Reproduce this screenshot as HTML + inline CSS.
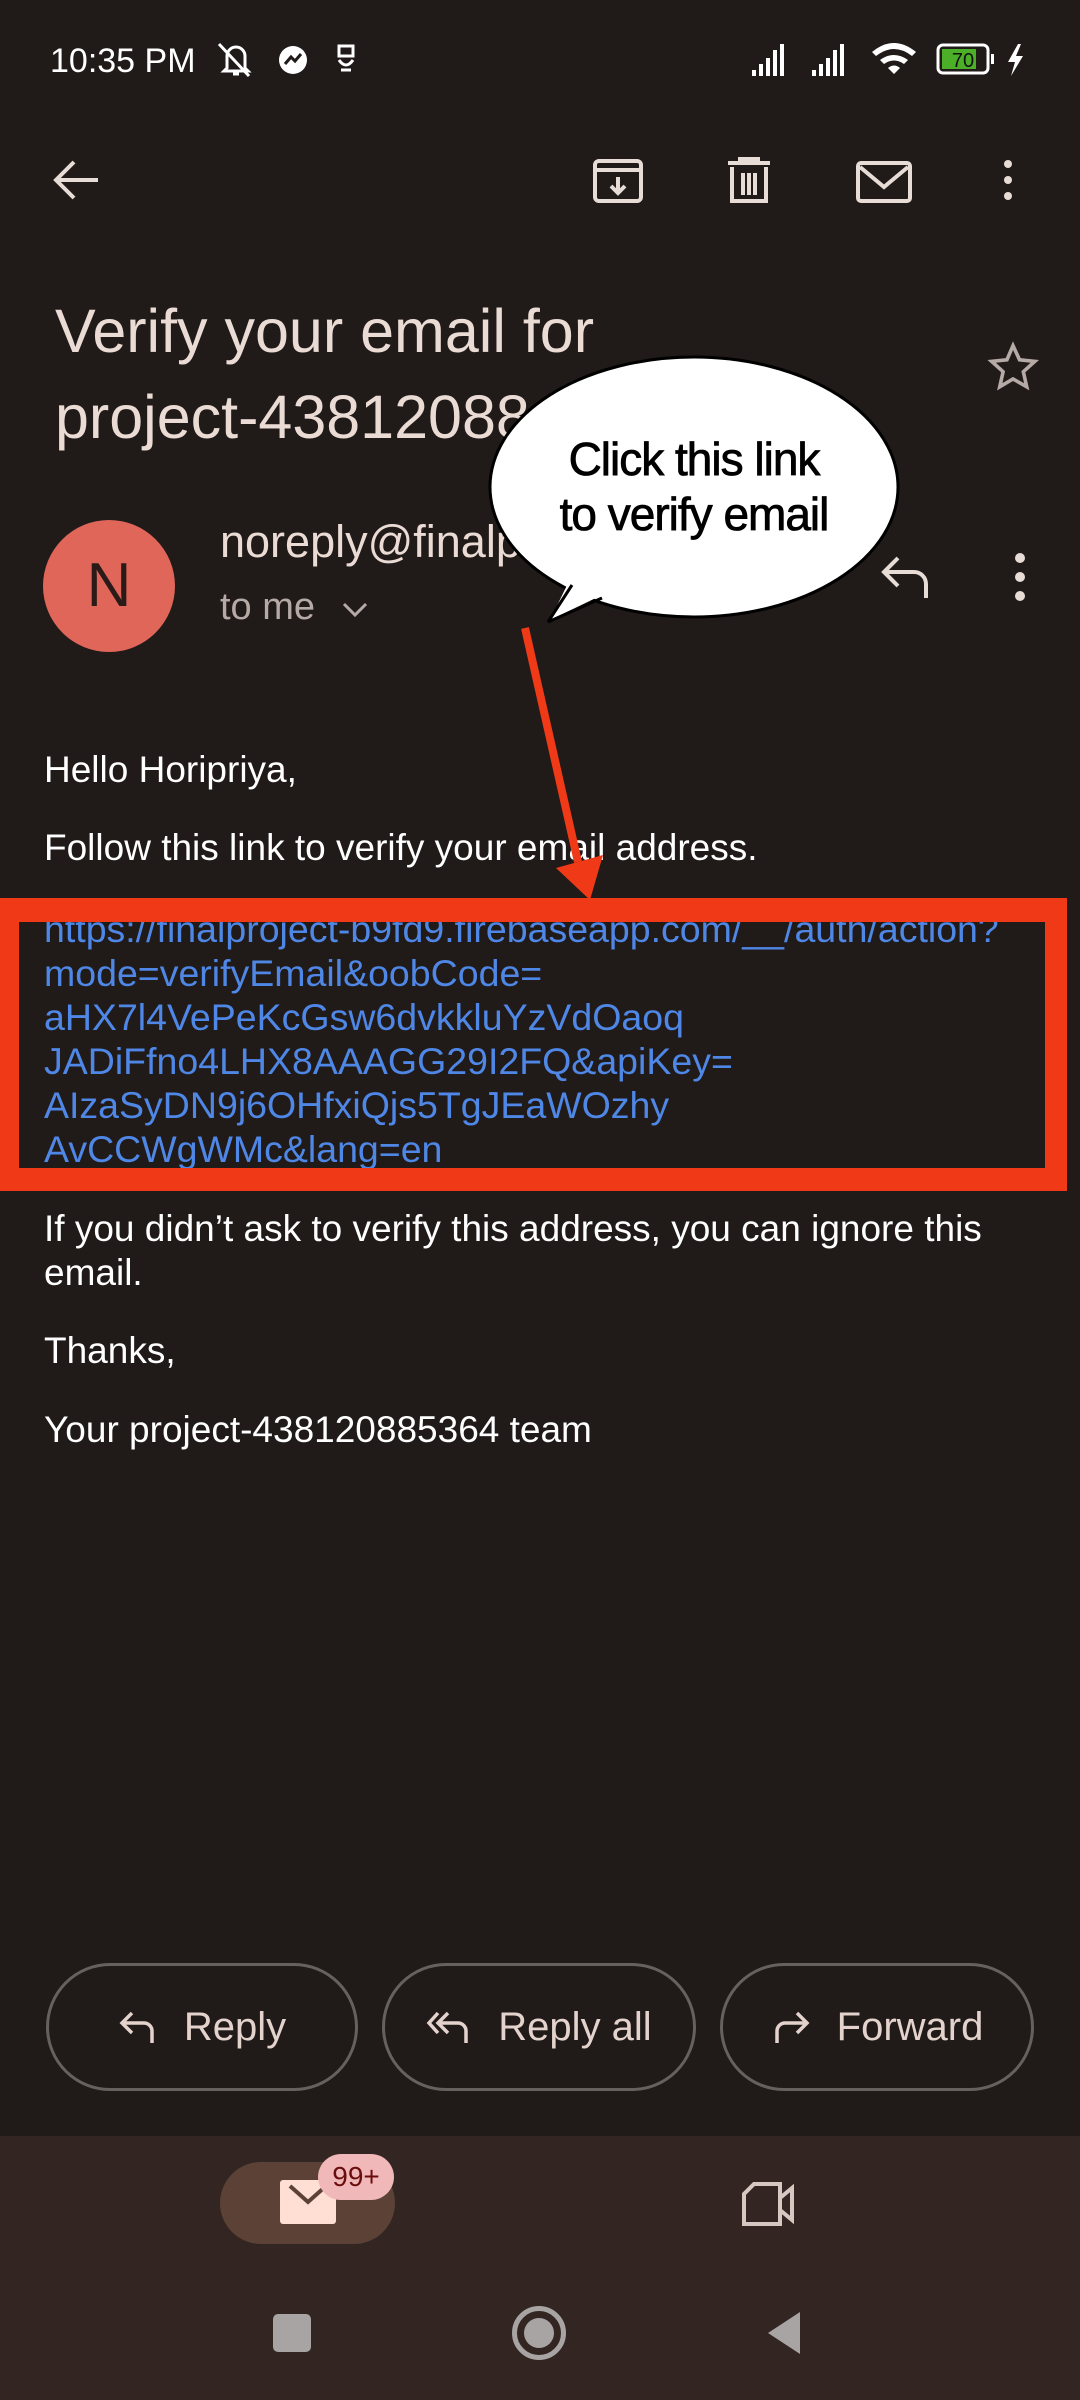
<!DOCTYPE html>
<html><head><meta charset="utf-8"><style>
*{margin:0;padding:0;box-sizing:border-box}
body{width:1080px;height:2400px;background:#201a19;position:relative;overflow:hidden;font-family:"Liberation Sans",sans-serif;color:#f2e8e4}
.a{position:absolute;white-space:nowrap}
.b{font-size:37px;color:#fff;left:44px}
.l{font-size:37.5px;color:#4f87e6;left:44px}
.btn{position:absolute;top:1963px;height:128px;border:3px solid #66615f;border-radius:64px;display:flex;align-items:center;justify-content:center;gap:26px;color:#e4d3cc;font-size:40px}
</style></head><body>
<!-- status bar -->
<div class="a" style="left:50px;top:42px;font-size:34px;color:#fff">10:35 PM</div>
<svg class="a" style="left:215px;top:38px" width="150" height="44" viewBox="0 0 150 44" fill="none" stroke="#fff" stroke-width="3">
<path d="M12 30 V18 a9 9 0 0 1 18 0 V30 l3 3 H9z M4 6 L34 38 M18 36 h6"/>
<circle cx="78" cy="22" r="14" fill="#fff" stroke="none"/><path d="M70 26 l6-7 4 4 6-7" stroke="#201a19"/>
<path d="M124 8 h14 v10 h-14z M124 22 q7 10 14 0 M126 32 h10"/></svg>
<svg class="a" style="left:750px;top:40px" width="290" height="40" viewBox="0 0 290 40" fill="#fff">
<rect x="2" y="30" width="4" height="6"/><rect x="9" y="24" width="4" height="12"/><rect x="16" y="18" width="4" height="18"/><rect x="23" y="10" width="4" height="26"/><rect x="30" y="4" width="4" height="32"/>
<rect x="62" y="30" width="4" height="6"/><rect x="69" y="24" width="4" height="12"/><rect x="76" y="18" width="4" height="18"/><rect x="83" y="10" width="4" height="26"/><rect x="90" y="4" width="4" height="32"/>
<path d="M122 12 q22-18 44 0 l-4 4 q-18-14 -36 0z M130 20 q14-10 28 0 l-4 4 q-10-7 -20 0z M138 28 q6-5 12 0 l-6 6z"/>
<rect x="188" y="5" width="50" height="28" rx="5" fill="none" stroke="#fff" stroke-width="3"/><rect x="192" y="9" width="34" height="20" fill="#4caf28"/>
<text x="213" y="27" font-size="20" fill="#111" text-anchor="middle" font-family="Liberation Sans">70</text>
<rect x="241" y="14" width="3" height="10"/><path d="M268 4 l-10 18 h7 l-4 14 l12-20 h-7 l5-12z"/></svg>
<!-- toolbar -->
<svg class="a" style="left:50px;top:155px" width="980" height="50" viewBox="0 0 980 50" fill="none" stroke="#e8dcd6" stroke-width="4">
<path d="M48 25 H6 M24 7 L6 25 L24 43"/>
<rect x="545" y="6" width="46" height="40" rx="4"/><path d="M545 15 h46 M568 22 v16 M561 31 l7 7 7-7"/>
<path d="M678 8 h42 M690 8 v-4 h18 v4 M682 12 v34 h34 v-34 M693 18 v22 M699 18 v22 M705 18 v22"/>
<rect x="808" y="8" width="52" height="38" rx="3"/><path d="M810 12 l24 20 24-20"/>
<circle cx="958" cy="9" r="4" fill="#e8dcd6" stroke="none"/><circle cx="958" cy="25" r="4" fill="#e8dcd6" stroke="none"/><circle cx="958" cy="41" r="4" fill="#e8dcd6" stroke="none"/></svg>
<!-- subject -->
<div class="a" style="left:55px;top:288px;font-size:61px;color:#eadbd4;line-height:86px">Verify your email for<br>project-43812088</div>
<svg class="a" style="left:986px;top:340px" width="54" height="54" viewBox="0 0 24 24" fill="none" stroke="#b5aaa6" stroke-width="1.6"><path d="M12 2.5l2.9 6.3 6.8.7-5.1 4.6 1.5 6.7L12 17.3l-5.9 3.5 1.5-6.7-5.1-4.6 6.8-.7z"/></svg>
<!-- sender -->
<div class="a" style="left:43px;top:520px;width:132px;height:132px;border-radius:50%;background:#e0665a;color:#2a1a18;font-size:62px;text-align:center;line-height:132px">N</div>
<div class="a" style="left:220px;top:516px;font-size:45px;color:#eadbd4">noreply@finalp</div>
<div class="a" style="left:220px;top:586px;font-size:38px;color:#b5aaa6">to me</div>
<svg class="a" style="left:340px;top:598px" width="30" height="24" viewBox="0 0 30 24" fill="none" stroke="#b5aaa6" stroke-width="3"><path d="M4 6 l11 11 11-11"/></svg>
<svg class="a" style="left:878px;top:552px" width="54" height="50" viewBox="0 0 54 50" fill="none" stroke="#e8dcd6" stroke-width="4"><path d="M20 6 L6 20 L20 34 M6 20 H36 a12 12 0 0 1 12 12 V46"/></svg>
<svg class="a" style="left:1010px;top:552px" width="20" height="50"><circle cx="10" cy="6" r="5" fill="#e8dcd6"/><circle cx="10" cy="25" r="5" fill="#e8dcd6"/><circle cx="10" cy="44" r="5" fill="#e8dcd6"/></svg>
<!-- body -->
<div class="a b" style="top:749px">Hello Horipriya,</div>
<div class="a b" style="top:827px">Follow this link to verify your email address.</div>
<!-- bubble + arrow -->
<svg class="a" style="left:0;top:340px" width="1080" height="580" viewBox="0 340 1080 580">
<ellipse cx="694" cy="487" rx="204" ry="130" fill="#fff" stroke="#000" stroke-width="3"/>
<path d="M572 575 L550 620 L600 596z" fill="#fff"/>
<path d="M548 622 L572 585 M548 622 L602 598" stroke="#000" stroke-width="3"/>
<text x="694" y="475" font-size="46" text-anchor="middle" fill="#000" stroke="#000" stroke-width="0.8" font-family="Liberation Sans" style="letter-spacing:-1px">Click this link</text>
<text x="694" y="530" font-size="46" text-anchor="middle" fill="#000" stroke="#000" stroke-width="0.8" font-family="Liberation Sans" style="letter-spacing:-1px">to verify email</text>
<path d="M525 628 L578 862" stroke="#f03a17" stroke-width="8"/>
<path d="M556 868 L590 900 L603 855z" fill="#f03a17"/>
</svg>
<div class="a" style="left:0;top:898px;width:1067px;height:293px;overflow:hidden">
<div class="a l" style="top:9px;line-height:44px">https://finalproject-b9fd9.firebaseapp.com/__/auth/action?<br>mode=verifyEmail&amp;oobCode=<br>aHX7l4VePeKcGsw6dvkkluYzVdOaoq<br>JADiFfno4LHX8AAAGG29I2FQ&amp;apiKey=<br>AIzaSyDN9j6OHfxiQjs5TgJEaWOzhy<br>AvCCWgWMc&amp;lang=en</div>
<div class="a" style="left:0;top:0;width:1067px;height:293px;border:solid #f03a17;border-width:24px 22px 23px 19px"></div>
</div>
<div class="a b" style="top:1207px;line-height:44px">If you didn’t ask to verify this address, you can ignore this<br>email.</div>
<div class="a b" style="top:1330px">Thanks,</div>
<div class="a b" style="top:1409px">Your project-438120885364 team</div>
<!-- buttons -->
<div class="btn" style="left:46px;width:312px"><svg width="40" height="36" viewBox="0 0 40 36" fill="none" stroke="#e4d3cc" stroke-width="3.5"><path d="M14 4 L4 14 L14 24 M4 14 H26 a8 8 0 0 1 8 8 V34"/></svg>Reply</div>
<div class="btn" style="left:382px;width:314px"><svg width="46" height="36" viewBox="0 0 46 36" fill="none" stroke="#e4d3cc" stroke-width="3.5"><path d="M12 4 L3 14 L12 24 M22 4 L12 14 L22 24 M12 14 H32 a8 8 0 0 1 8 8 V34"/></svg>Reply all</div>
<div class="btn" style="left:720px;width:314px"><svg width="40" height="36" viewBox="0 0 40 36" fill="none" stroke="#e4d3cc" stroke-width="3.5"><path d="M26 4 L36 14 L26 24 M36 14 H14 a8 8 0 0 0 -8 8 V34"/></svg>Forward</div>
<!-- bottom nav -->
<div class="a" style="left:0;top:2136px;width:1080px;height:264px;background:#322522"></div>
<div class="a" style="left:220px;top:2162px;width:175px;height:82px;border-radius:41px;background:#5c4236"></div>
<svg class="a" style="left:280px;top:2180px" width="58" height="46" viewBox="0 0 58 46"><rect x="0" y="0" width="56" height="44" rx="3" fill="#ffdfd3"/><path d="M10 6 l18 16 18-16" fill="none" stroke="#5c4236" stroke-width="4"/></svg>
<div class="a" style="left:318px;top:2154px;width:76px;height:46px;border-radius:23px;background:#f0b8b8;color:#6a0d0d;font-size:28px;text-align:center;line-height:46px">99+</div>
<svg class="a" style="left:742px;top:2182px" width="58" height="44" viewBox="0 0 58 44" fill="none" stroke="#d8c8c2" stroke-width="4"><path d="M12 2 h26 v40 h-36 v-30z M38 16 l12-10 v32 l-12-10"/></svg>
<div class="a" style="left:273px;top:2314px;width:38px;height:38px;border-radius:5px;background:#a8a4a4"></div>
<div class="a" style="left:512px;top:2306px;width:54px;height:54px;border-radius:50%;border:5px solid #a8a4a4"></div>
<div class="a" style="left:524px;top:2318px;width:30px;height:30px;border-radius:50%;background:#a8a4a4"></div>
<svg class="a" style="left:764px;top:2310px" width="40" height="46"><path d="M36 2 V44 L4 23z" fill="#a8a4a4"/></svg>
</body></html>
